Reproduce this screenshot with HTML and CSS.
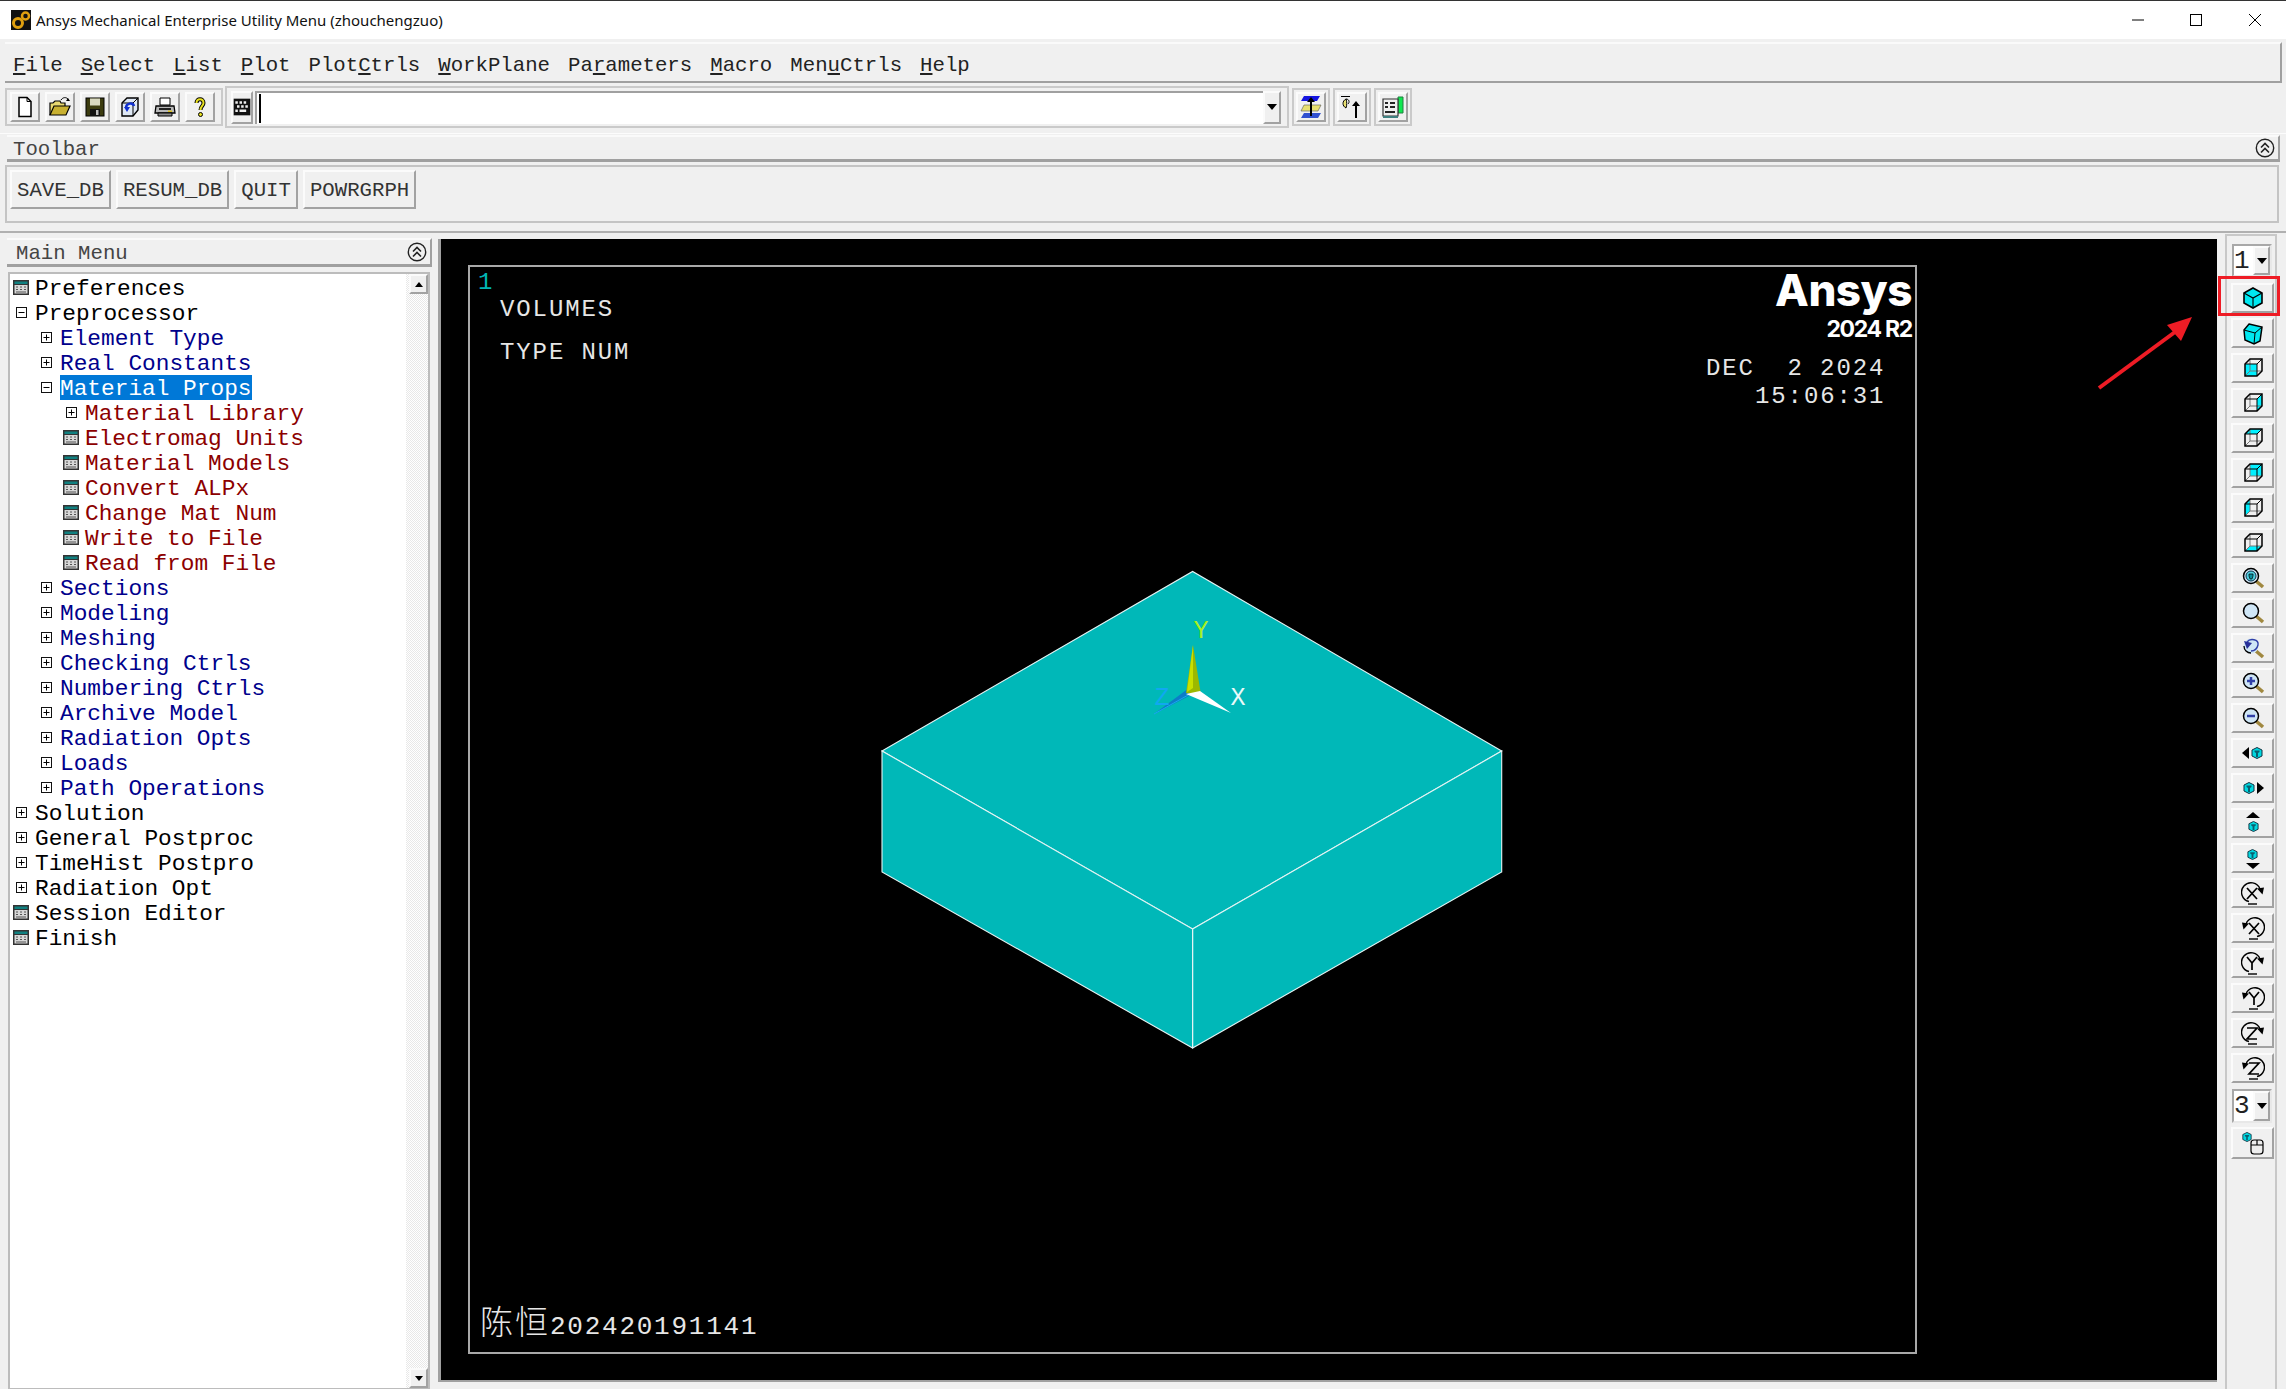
FILE: index.html
```html
<!DOCTYPE html>
<html lang="en">
<head>
<meta charset="utf-8">
<title>Ansys Mechanical Enterprise Utility Menu</title>
<link rel="stylesheet" href="styles.css">
</head>
<body>
<svg class="defs" aria-hidden="true">
  <symbol id="i-app" viewBox="0 0 20 20"><rect width="20" height="20" fill="#111"/><circle cx="7" cy="13" r="4.5" fill="none" stroke="#e0a010" stroke-width="3"/><circle cx="14.500" cy="6" r="3.500" fill="none" stroke="#e0a010" stroke-width="2.500"/></symbol>
  <symbol id="i-new" viewBox="0 0 24 24"><path d="M6 2.500h8l4 4v15H6z" fill="#fff" stroke="#000" stroke-width="1.500"/><path d="M14 2.500v4h4" fill="none" stroke="#000"/></symbol>
  <symbol id="i-open" viewBox="0 0 24 24"><path d="M2 20V8h3l2-2h5l1 2h4v3" fill="#e8d870" stroke="#000" stroke-width="1.200"/><path d="M2 20l4-9h16l-4 9z" fill="#c8b030" stroke="#000" stroke-width="1.200"/><path d="M13 5c2-3 5-3 7-1" fill="none" stroke="#000"/><path d="M22 6l-4 0 2-3z"/></symbol>
  <symbol id="i-save" viewBox="0 0 24 24"><rect x="3" y="3" width="18" height="18" fill="#3c3c10" stroke="#000"/><rect x="7" y="3.500" width="10" height="7" fill="#d8d8c0"/><rect x="7" y="14" width="10" height="7" fill="#111"/><rect x="13" y="15" width="2.500" height="5" fill="#bbb"/></symbol>
  <symbol id="i-db" viewBox="0 0 24 24"><path d="M4 8l5-5h11v12l-5 6H4z" fill="#dfe8f4" stroke="#000" stroke-width="1.400"/><path d="M4 8h11v13M15 8l5-5" fill="none" stroke="#000"/><path d="M8 13c0-5 7-6 8-2" fill="none" stroke="#1030d0" stroke-width="2.500"/><path d="M6 12h6l-3 5z" fill="#1030d0"/></symbol>
  <symbol id="i-print" viewBox="0 0 24 24"><path d="M7 3h10v7H7z" fill="#fff" stroke="#000"/><path d="M3 11h18l1 7H2z" fill="#b8b8b8" stroke="#000" stroke-width="1.300"/><path d="M5 18h14v3H5z" fill="#8a8a8a" stroke="#000"/><path d="M6 14h12" stroke="#222" stroke-width="2"/><rect x="15" y="15.500" width="4" height="1.500" fill="#d8c020"/></symbol>
  <symbol id="i-help" viewBox="0 0 24 24"><path d="M8.500 8c0-5 7-5 7 0 0 3-3 3-3 7" fill="none" stroke="#000" stroke-width="4"/><path d="M8.500 8c0-5 7-5 7 0 0 3-3 3-3 7" fill="none" stroke="#e8e020" stroke-width="2"/><circle cx="12.500" cy="19.500" r="2" fill="#e8e020" stroke="#000"/></symbol>
  <symbol id="i-keys" viewBox="0 0 24 24"><rect x="2" y="2" width="20" height="20" fill="#111"/><path d="M4 5h3v3H4zM9 5h3v3H9zM14 5h3v3h-3zM6 10h3v3H6zM11 10h3v3h-3zM16 10h3v3h-3zM4 15h3v3H4zM9 15h8v3H9z" fill="#eee"/></symbol>
  <symbol id="i-planes" viewBox="0 0 24 24"><path d="M5 1h16l-3 5H2z" fill="#1414e0"/><path d="M5 10h17l-3 6H2z" fill="#e8e070" stroke="#555" stroke-width=".6"/><path d="M5 18h17l-3 5H2z" fill="#3050d0"/><path d="M11 21V7H8l4-5 4 5h-3v14z" fill="#000"/></symbol>
  <symbol id="i-moon" viewBox="0 0 24 24"><path d="M1 1.500h9" stroke="#000"/><path d="M6 4c-4 2-4 7 0 9 1-3 1-6 0-9z" fill="#e8e070" stroke="#000"/><path d="M6 4c3 0 4 3 2 5" fill="none" stroke="#000"/><path d="M15 23V11h-3l4-5 4 5h-3v12z" fill="#000"/></symbol>
  <symbol id="i-book" viewBox="0 0 24 24"><path d="M17 2h5v16h-5z" fill="#10e850" stroke="#208040"/><path d="M2 4h15v17H2z" fill="#eee" stroke="#333" stroke-width="1.200"/><path d="M2 21h15v2H2z" fill="#408080"/><path d="M4 8h3M9 8h5M4 12h3M9 12h5M4 17h10" stroke="#222" stroke-width="1.800"/></symbol>
  <symbol id="i-iso" viewBox="0 0 24 24"><path d="M12 2l9 5v10l-9 5-9-5V7z" fill="#00e8f0" stroke="#000" stroke-width="1.600"/><path d="M3 7l9 5 9-5M12 12v10" fill="none" stroke="#000" stroke-width="1.100"/></symbol>
  <symbol id="i-obl" viewBox="0 0 24 24"><path d="M8 3l13 3-2 14-6 3-9-4-1-10z" fill="#00e8f0" stroke="#000" stroke-width="1.500"/><path d="M3 9l11 3-1 11M14 12l7-6" fill="none" stroke="#000"/></symbol>
  <symbol id="i-wire" viewBox="0 0 24 24"><path d="M9 3v12h12M9 15l-5 5" fill="none" stroke="#777"/><path d="M4 8l5-5h12v12l-5 5H4z" fill="none" stroke="#000" stroke-width="1.500"/><path d="M4 8h12v12M16 8l5-5" fill="none" stroke="#000"/></symbol>
  <symbol id="i-front" viewBox="0 0 24 24"><rect x="4" y="8" width="12" height="12" fill="#00f0ff"/><use href="#i-wire"/></symbol>
  <symbol id="i-right" viewBox="0 0 24 24"><path d="M16 8l5-5v12l-5 5z" fill="#00f0ff"/><use href="#i-wire"/></symbol>
  <symbol id="i-top" viewBox="0 0 24 24"><path d="M4 8l5-5h12l-5 5z" fill="#00f0ff"/><use href="#i-wire"/></symbol>
  <symbol id="i-back" viewBox="0 0 24 24"><rect x="9" y="3" width="12" height="12" fill="#00f0ff"/><use href="#i-wire"/></symbol>
  <symbol id="i-left" viewBox="0 0 24 24"><path d="M4 8l5-5v12l-5 5z" fill="#00f0ff"/><use href="#i-wire"/></symbol>
  <symbol id="i-bottom" viewBox="0 0 24 24"><path d="M4 20l5-5h12l-5 5z" fill="#00f0ff"/><use href="#i-wire"/></symbol>
  <symbol id="i-lens" viewBox="0 0 24 24"><path d="M15 15l7 6" stroke="#a08840" stroke-width="3.500"/><circle cx="10" cy="10" r="7.500" fill="#cfe6f6" stroke="#000" stroke-width="1.500"/></symbol>
  <symbol id="i-zfit" viewBox="0 0 24 24"><use href="#i-lens"/><circle cx="10" cy="10" r="5" fill="#4fd0e0" stroke="#10304a"/><path d="M8 8h4v2l-1 3H9l-1-3z" fill="#0890a0" stroke="#000" stroke-width=".7"/></symbol>
  <symbol id="i-zback" viewBox="0 0 24 24"><path d="M15 15l7 6" stroke="#a08840" stroke-width="3.500"/><circle cx="10" cy="10" r="7.500" fill="#cfe6f6"/><path d="M6 6c3-4 12-3 11 3-1 4-3 6-7 6" fill="none" stroke="#3040a8" stroke-width="1.400"/><path d="M3 5l8 2-5 6z" fill="#28309a"/><path d="M3 10c0 4 3 7 7 7" fill="none" stroke="#000" stroke-width="1.300"/></symbol>
  <symbol id="i-zin" viewBox="0 0 24 24"><use href="#i-lens"/><path d="M6 10h8M10 6v8" stroke="#3040a8" stroke-width="2.500"/></symbol>
  <symbol id="i-zout" viewBox="0 0 24 24"><use href="#i-lens"/><path d="M6 10h8" stroke="#3040a8" stroke-width="2.500"/></symbol>
  <symbol id="i-hex" viewBox="0 0 12 12"><path d="M6 .5l5 2.500v6l-5 2.500-5-2.500V3z" fill="#00d8e0" stroke="#103040"/><path d="M3.500 3.500h5v1.500l-1.500 1v4H5V6L3.500 5z" fill="#086070"/></symbol>
  <symbol id="i-pl" viewBox="0 0 24 24"><path d="M1 12l7-6v12z" fill="#000"/><use href="#i-hex" x="10" y="6" width="12" height="12"/></symbol>
  <symbol id="i-pr" viewBox="0 0 24 24"><path d="M23 12l-7-6v12z" fill="#000"/><use href="#i-hex" x="2" y="6" width="12" height="12"/></symbol>
  <symbol id="i-pu" viewBox="0 0 24 24"><path d="M12 1l-7 6h14z" fill="#000"/><use href="#i-hex" x="7" y="10" width="11" height="11"/></symbol>
  <symbol id="i-pd" viewBox="0 0 24 24"><path d="M12 23l-7-6h14z" fill="#000"/><use href="#i-hex" x="6" y="3" width="11" height="11"/></symbol>
  <symbol id="i-arc" viewBox="0 0 24 24"><path d="M8 20.500A9.500 9.500 0 1 1 19 8" fill="none" stroke="#000" stroke-width="1.400"/><path d="M7 23h9" stroke="#000" stroke-width="1.400"/><path d="M16 7.500l7-1-1.500 7z" fill="#000"/></symbol>
  <symbol id="i-xp" viewBox="0 0 24 24"><use href="#i-arc"/><path d="M6 7l10 11M16 7L6 18" stroke="#000" stroke-width="1.700"/></symbol>
  <symbol id="i-xm" viewBox="0 0 24 24"><g transform="translate(24) scale(-1 1)"><use href="#i-arc"/></g><path d="M8 7l10 11M18 7L8 18" stroke="#000" stroke-width="1.700"/></symbol>
  <symbol id="i-yp" viewBox="0 0 24 24"><use href="#i-arc"/><path d="M6 6l5 6 5-6M11 12v7" fill="none" stroke="#000" stroke-width="1.700"/></symbol>
  <symbol id="i-ym" viewBox="0 0 24 24"><g transform="translate(24) scale(-1 1)"><use href="#i-arc"/></g><path d="M8 6l5 6 5-6M13 12v7" fill="none" stroke="#000" stroke-width="1.700"/></symbol>
  <symbol id="i-zp" viewBox="0 0 24 24"><use href="#i-arc"/><path d="M6 7h10L6 18h10" fill="none" stroke="#000" stroke-width="1.700"/></symbol>
  <symbol id="i-zm" viewBox="0 0 24 24"><g transform="translate(24) scale(-1 1)"><use href="#i-arc"/></g><path d="M8 7h10L8 18h10" fill="none" stroke="#000" stroke-width="1.700"/></symbol>
  <symbol id="i-mouse" viewBox="0 0 24 24"><use href="#i-hex" x="1" y="1" width="10" height="10"/><rect x="10" y="9" width="12" height="14" rx="3" fill="#eee" stroke="#000" stroke-width="1.200"/><path d="M10 14h12M16 9v5" stroke="#000" stroke-width="1.200"/></symbol>
  <symbol id="i-calc" viewBox="0 0 16 15"><rect width="16" height="15" fill="#333"/><rect x="1.500" y="1.500" width="13" height="2.500" fill="#108080"/><rect x="1.500" y="5" width="13" height="8.500" fill="#d8d8d8"/><path d="M3 7h2M7 7h2M11 7h2M3 9.500h2M7 9.500h2M11 9.500h2M3 12h10" stroke="#555"/></symbol>
  <symbol id="i-plus" viewBox="0 0 11 11"><rect x=".5" y=".5" width="10" height="10" fill="#fff" stroke="#111"/><path d="M2.500 5.500h6M5.500 2.500v6" stroke="#000"/></symbol>
  <symbol id="i-minus" viewBox="0 0 11 11"><rect x=".5" y=".5" width="10" height="10" fill="#fff" stroke="#111"/><path d="M2.500 5.500h6" stroke="#000"/></symbol>
  <symbol id="i-collapse" viewBox="0 0 20 20"><circle cx="10" cy="10" r="8.700" fill="none" stroke="#222" stroke-width="1.400"/><path d="M6 9.500l4-4 4 4M6 14.500l4-4 4 4" fill="none" stroke="#222" stroke-width="1.600"/></symbol>
  <symbol id="i-down" viewBox="0 0 10 6"><path d="M0 0h10L5 6z" fill="#000"/></symbol>
  <symbol id="i-up" viewBox="0 0 10 6"><path d="M0 6h10L5 0z" fill="#000"/></symbol>
</svg>

<div class="titlebar">
  <svg class="appicon"><use href="#i-app"/></svg>
  <span class="titletext">Ansys Mechanical Enterprise Utility Menu (zhouchengzuo)</span>
  <span class="winbtns">
    <span class="winbtn"><svg class="winglyph" viewBox="0 0 12 12"><path d="M0 6h12" stroke="#000"/></svg></span>
    <span class="winbtn"><svg class="winglyph" viewBox="0 0 12 12"><rect x=".5" y=".5" width="11" height="11" fill="none" stroke="#000"/></svg></span>
    <span class="winbtn"><svg class="winglyph" viewBox="0 0 12 12"><path d="M0 0l12 12M12 0L0 12" stroke="#000"/></svg></span>
  </span>
</div>

<nav class="menubar">
  <span><u>F</u>ile</span><span><u>S</u>elect</span><span><u>L</u>ist</span><span><u>P</u>lot</span><span>Plot<u>C</u>trls</span><span><u>W</u>orkPlane</span><span>Pa<u>r</u>ameters</span><span><u>M</u>acro</span><span>Men<u>u</u>Ctrls</span><span><u>H</u>elp</span>
</nav>

<div class="toolrow">
  <div class="group filegroup">
    <span class="btn ib"><svg class="ic24"><use href="#i-new"/></svg></span>
    <span class="btn ib"><svg class="ic24"><use href="#i-open"/></svg></span>
    <span class="btn ib"><svg class="ic24"><use href="#i-save"/></svg></span>
    <span class="btn ib"><svg class="ic24"><use href="#i-db"/></svg></span>
    <span class="btn ib"><svg class="ic24"><use href="#i-print"/></svg></span>
    <span class="btn ib"><svg class="ic24"><use href="#i-help"/></svg></span>
  </div>
  <div class="group cmdgroup">
    <span class="btn keysbtn"><svg class="ic20"><use href="#i-keys"/></svg></span>
    <span class="cmdinput"><span class="caret"></span></span>
    <span class="btn dropbtn"><svg class="dropglyph"><use href="#i-down"/></svg></span>
  </div>
  <div class="cell"><span class="btn ib"><svg class="ic24"><use href="#i-planes"/></svg></span></div>
  <div class="cell"><span class="btn ib"><svg class="ic24"><use href="#i-moon"/></svg></span></div>
  <div class="cell"><span class="btn ib"><svg class="ic24"><use href="#i-book"/></svg></span></div>
</div>

<div class="divider"></div>

<div class="labelbar">
  <span class="labeltext">Toolbar</span>
  <svg class="collapse"><use href="#i-collapse"/></svg>
</div>

<div class="abbrpanel">
  <span class="btn abbr">SAVE_DB</span>
  <span class="btn abbr">RESUM_DB</span>
  <span class="btn abbr">QUIT</span>
  <span class="btn abbr">POWRGRPH</span>
</div>

<div class="sep"></div>

<main class="main">
  <aside class="sidebar">
    <div class="labelbar sidehead">
      <span class="labeltext">Main Menu</span>
      <svg class="collapse"><use href="#i-collapse"/></svg>
    </div>
    <div class="treebox">
      <ul class="tree">
        <li class="row l0"><svg class="calc"><use href="#i-calc"/></svg><span>Preferences</span></li>
        <li class="row l0"><svg class="twist"><use href="#i-minus"/></svg><span>Preprocessor</span></li>
        <li class="row l1"><svg class="twist"><use href="#i-plus"/></svg><span>Element Type</span></li>
        <li class="row l1"><svg class="twist"><use href="#i-plus"/></svg><span>Real Constants</span></li>
        <li class="row l1"><svg class="twist"><use href="#i-minus"/></svg><span class="selected">Material Props</span></li>
        <li class="row l2"><svg class="twist"><use href="#i-plus"/></svg><span>Material Library</span></li>
        <li class="row l2"><svg class="calc"><use href="#i-calc"/></svg><span>Electromag Units</span></li>
        <li class="row l2"><svg class="calc"><use href="#i-calc"/></svg><span>Material Models</span></li>
        <li class="row l2"><svg class="calc"><use href="#i-calc"/></svg><span>Convert ALPx</span></li>
        <li class="row l2"><svg class="calc"><use href="#i-calc"/></svg><span>Change Mat Num</span></li>
        <li class="row l2"><svg class="calc"><use href="#i-calc"/></svg><span>Write to File</span></li>
        <li class="row l2"><svg class="calc"><use href="#i-calc"/></svg><span>Read from File</span></li>
        <li class="row l1"><svg class="twist"><use href="#i-plus"/></svg><span>Sections</span></li>
        <li class="row l1"><svg class="twist"><use href="#i-plus"/></svg><span>Modeling</span></li>
        <li class="row l1"><svg class="twist"><use href="#i-plus"/></svg><span>Meshing</span></li>
        <li class="row l1"><svg class="twist"><use href="#i-plus"/></svg><span>Checking Ctrls</span></li>
        <li class="row l1"><svg class="twist"><use href="#i-plus"/></svg><span>Numbering Ctrls</span></li>
        <li class="row l1"><svg class="twist"><use href="#i-plus"/></svg><span>Archive Model</span></li>
        <li class="row l1"><svg class="twist"><use href="#i-plus"/></svg><span>Radiation Opts</span></li>
        <li class="row l1"><svg class="twist"><use href="#i-plus"/></svg><span>Loads</span></li>
        <li class="row l1"><svg class="twist"><use href="#i-plus"/></svg><span>Path Operations</span></li>
        <li class="row l0"><svg class="twist"><use href="#i-plus"/></svg><span>Solution</span></li>
        <li class="row l0"><svg class="twist"><use href="#i-plus"/></svg><span>General Postproc</span></li>
        <li class="row l0"><svg class="twist"><use href="#i-plus"/></svg><span>TimeHist Postpro</span></li>
        <li class="row l0"><svg class="twist"><use href="#i-plus"/></svg><span>Radiation Opt</span></li>
        <li class="row l0"><svg class="calc"><use href="#i-calc"/></svg><span>Session Editor</span></li>
        <li class="row l0"><svg class="calc"><use href="#i-calc"/></svg><span>Finish</span></li>
      </ul>
      <div class="scroll">
        <span class="btn scrollbtn"><svg class="scrollglyph"><use href="#i-up"/></svg></span>
        <span class="scrolltrack"></span>
        <span class="btn scrollbtn"><svg class="scrollglyph"><use href="#i-down"/></svg></span>
      </div>
    </div>
  </aside>

  <section class="gfx">
    <div class="black">
      <div class="frame">
        <svg class="plot" viewBox="468 265 1449 1089">
          <path d="M882 751L1192.600 571.500 1501.700 751 1192.600 929z" class="f"/>
          <path d="M882 751L1192.600 929V1048L882 872zM1192.600 929L1501.700 751V872L1192.600 1048z" class="f"/>
          <path d="M1192.600 929V1048" class="e"/>
          <path d="M1154 714L1189 688 1193 694z" fill="#0c7cc8"/>
          <path d="M1154 714L1190 694" stroke="#18a8f0" stroke-width="1"/>
          <path d="M1193 645L1186 693 1201 695z" fill="#9cb800"/>
          <path d="M1193 645L1187 692 1193 688z" fill="#c8e000"/>
          <path d="M1231 713L1186 694 1200 691z" fill="#fff"/>
          <text x="1201" y="638" class="axis ay">Y</text>
          <text x="1238" y="705" class="axis ax">X</text>
          <text x="1162" y="705" class="axis az">Z</text>
          <text x="478" y="289" class="vt wn">1</text>
          <text x="500" y="316" class="vt">VOLUMES</text>
          <text x="500" y="359" class="vt">TYPE NUM</text>
          <text x="1706" y="375" class="vt">DEC  2 2024</text>
          <text x="1755" y="403" class="vt">15:06:31</text>
          <text x="1912" y="306" class="logo">Ansys</text>
          <text x="1912" y="337" class="rel">2024 R2</text>
          <text x="480" y="1334" class="vt note"><tspan class="cjk">陈恒</tspan>202420191141</text>
        </svg>
      </div>
    </div>
  </section>

  <aside class="viewpanel">
    <div class="combo"><span class="comboval">1</span><span class="btn combobtn"><svg class="dropglyph"><use href="#i-down"/></svg></span></div>
    <span class="btn vb"><svg class="ic24"><use href="#i-iso"/></svg></span>
    <span class="btn vb"><svg class="ic24"><use href="#i-obl"/></svg></span>
    <span class="btn vb"><svg class="ic24"><use href="#i-front"/></svg></span>
    <span class="btn vb"><svg class="ic24"><use href="#i-right"/></svg></span>
    <span class="btn vb"><svg class="ic24"><use href="#i-top"/></svg></span>
    <span class="btn vb"><svg class="ic24"><use href="#i-back"/></svg></span>
    <span class="btn vb"><svg class="ic24"><use href="#i-left"/></svg></span>
    <span class="btn vb"><svg class="ic24"><use href="#i-bottom"/></svg></span>
    <span class="btn vb"><svg class="ic24"><use href="#i-zfit"/></svg></span>
    <span class="btn vb"><svg class="ic24"><use href="#i-lens"/></svg></span>
    <span class="btn vb"><svg class="ic24"><use href="#i-zback"/></svg></span>
    <span class="btn vb"><svg class="ic24"><use href="#i-zin"/></svg></span>
    <span class="btn vb"><svg class="ic24"><use href="#i-zout"/></svg></span>
    <span class="btn vb"><svg class="ic24"><use href="#i-pl"/></svg></span>
    <span class="btn vb"><svg class="ic24"><use href="#i-pr"/></svg></span>
    <span class="btn vb"><svg class="ic24"><use href="#i-pu"/></svg></span>
    <span class="btn vb"><svg class="ic24"><use href="#i-pd"/></svg></span>
    <span class="btn vb"><svg class="ic24"><use href="#i-xp"/></svg></span>
    <span class="btn vb"><svg class="ic24"><use href="#i-xm"/></svg></span>
    <span class="btn vb"><svg class="ic24"><use href="#i-yp"/></svg></span>
    <span class="btn vb"><svg class="ic24"><use href="#i-ym"/></svg></span>
    <span class="btn vb"><svg class="ic24"><use href="#i-zp"/></svg></span>
    <span class="btn vb"><svg class="ic24"><use href="#i-zm"/></svg></span>
    <div class="combo combo3"><span class="comboval">3</span><span class="btn combobtn"><svg class="dropglyph"><use href="#i-down"/></svg></span></div>
    <span class="btn vb vblast"><svg class="ic24"><use href="#i-mouse"/></svg></span>
  </aside>
</main>

<div class="redbox"></div>
<svg class="redarrow" viewBox="0 0 100 75"><path d="M4 73L80 17" stroke="#ee1c25" stroke-width="4"/><path d="M97 2L72 10 86 26z" fill="#ee1c25"/></svg>
</body>
</html>
```
FILE: styles.css
```css
* { box-sizing: border-box; }
html, body { margin: 0; padding: 0; }
body {
  position: relative;
  width: 2286px;
  height: 1389px;
  overflow: hidden;
  background: #f0f0f0;
  font-family: "Liberation Mono", "Noto Sans CJK SC", monospace;
  font-size: 20.7px;
  color: #333;
  display: flex;
  flex-direction: column;
}
.defs { position: absolute; width: 0; height: 0; }

.titlebar {
  height: 39px;
  flex: none;
  display: flex;
  align-items: center;
  background: #fff;
  border-top: 1px solid #333;
  padding: 0 2px 0 11px;
}
.appicon { width: 20px; height: 20px; flex: none; }
.titletext {
  margin-left: 5px;
  font-family: "Noto Sans", sans-serif;
  font-size: 15px;
  color: #111;
}
.winbtns { margin-left: auto; display: flex; }
.winbtn { width: 58.5px; display: flex; justify-content: center; }
.winglyph { width: 12px; height: 12px; }

.menubar {
  flex: none;
  margin: 3px 4px 0 5px;
  height: 41px;
  display: flex;
  align-items: center;
  gap: 18px;
  padding: 5px 0 0 8px;
  border-bottom: 2px solid #a0a0a0;
  border-right: 2px solid #a0a0a0;
  border-top: 2px solid #fafafa;
  color: #222;
}

.btn {
  display: inline-flex;
  align-items: center;
  justify-content: center;
  background: #f0f0f0;
  border: 2px solid;
  border-color: #fbfbfb #a2a2a2 #a2a2a2 #fbfbfb;
}
.toolrow {
  flex: none;
  margin-top: 3px;
  height: 42px;
  padding-left: 5px;
  display: flex;
  align-items: center;
}
.group, .cell { border: 2px solid #cacaca; display: flex; align-items: center; }
.filegroup { width: 218px; height: 38px; padding-left: 3px; gap: 5px; }
.ib { width: 30px; height: 30px; flex: none; }
.ic24 { width: 24px; height: 24px; flex: none; }
.ic20 { width: 20px; height: 20px; flex: none; }
.cmdgroup { width: 1064px; height: 42px; margin-left: 2px; padding-left: 4px; }
.keysbtn { width: 22px; height: 33px; flex: none; }
.cmdinput {
  width: 1008px;
  height: 33px;
  margin-left: 2px;
  background: #fff;
  border-top: 2px solid #a0a0a0;
  border-left: 2px solid #a0a0a0;
  padding: 1px 0 1px 2px;
  display: flex;
  flex: none;
}
.caret { width: 2px; background: #000; }
.dropbtn { width: 18px; height: 33px; flex: none; }
.dropglyph { width: 10px; height: 6px; }
.cell { width: 38px; height: 38px; padding: 2px; margin-left: 3px; flex: none; }

.divider { flex: none; height: 1px; margin-top: 5px; background: #fcfcfc; }

.labelbar {
  flex: none;
  height: 27px;
  margin: 1px 6px 0 7px;
  padding: 0 3px 0 6px;
  display: flex;
  align-items: center;
  justify-content: space-between;
  border-top: 2px solid #fafafa;
  border-right: 2px solid #a0a0a0;
  border-bottom: 3px solid #a0a0a0;
  color: #444;
}
.labeltext { padding-top: 3px; }
.collapse { width: 20px; height: 20px; flex: none; }

.abbrpanel {
  flex: none;
  height: 58px;
  margin: 3px 7px 0 5px;
  padding: 3px 0 0 3px;
  border: 2px solid #c4c4c4;
  display: flex;
  align-items: flex-start;
  gap: 5px;
}
.abbr { height: 39px; padding: 2px 5px 0; color: #333; }

.sep { flex: none; height: 2px; margin-top: 8px; background: #b0b0b0; }

.main { flex: 1; min-height: 0; margin-top: 1px; display: flex; }

.sidebar {
  width: 425px;
  margin-left: 7px;
  padding-top: 4px;
  flex: none;
  display: flex;
  flex-direction: column;
}
.sidehead { margin: 0; height: 29px; padding: 0 3px 0 9px; }
.treebox {
  flex: 1;
  min-height: 0;
  margin: 5px 2px 0 1px;
  background: #fff;
  border: 2px solid #bcbcbc;
  border-bottom-width: 1px;
  display: flex;
}
.tree { flex: 1; list-style: none; margin: 0; padding: 1px 0 0; overflow: hidden; }
.row {
  height: 25px;
  display: flex;
  align-items: center;
  font-size: 22.8px;
  white-space: pre;
}
.row span { line-height: 22px; padding-top: 3px; }
.l0 { padding-left: 3px; color: #000; }
.l1 { padding-left: 28px; color: #00008c; }
.l2 { padding-left: 53px; color: #8c0000; }
.twist { width: 11px; height: 11px; margin: 0 8px 0 3px; flex: none; }
.calc { width: 16px; height: 15px; margin-right: 6px; flex: none; }
.row .selected { background: #0078d7; color: #fff; }

.scroll {
  width: 22px;
  flex: none;
  display: flex;
  flex-direction: column;
  align-items: flex-end;
  background: repeating-conic-gradient(#fff 0 25%, #e8e8e8 0 50%) 0 0 / 2px 2px;
}
.scrollbtn { width: 19px; height: 20px; flex: none; }
.scrollglyph { width: 8px; height: 5px; }
.scrolltrack { flex: 1; }

.gfx { width: 1779px; margin-left: 6px; padding-top: 5px; flex: none; }
.black {
  width: 1779px;
  height: 1143px;
  background: #000;
  border-left: 3px solid #a0a0a0;
  border-bottom: 2px solid #a0a0a0;
  padding: 26px 0 0 27px;
}
.frame {
  position: relative;
  width: 1449px;
  height: 1089px;
  box-shadow: inset 0 0 0 2px #a8a8a8;
}
.plot { position: absolute; left: 0; top: 0; width: 1449px; height: 1089px; overflow: visible; }
.f { fill: #00b8b8; stroke: #e4f4f4; stroke-width: 1.100; }
.e { stroke: #e4f4f4; stroke-width: 1.100; fill: none; }
.axis { font-family: "Liberation Mono", monospace; font-size: 25px; text-anchor: middle; }
.ay { fill: #a8f020; }
.ax { fill: #e8fafa; }
.az { fill: #10a8f0; }
.vt {
  font-family: "Liberation Mono", monospace;
  font-size: 24px;
  letter-spacing: 1.900px;
  fill: #e6e6e6;
  white-space: pre;
}
.wn { fill: #00b4b4; }
.note { font-size: 26px; letter-spacing: 1.750px; }
.cjk {
  font-family: "Noto Sans CJK SC", sans-serif;
  font-size: 33px;
  font-weight: 300;
  letter-spacing: 2px;
}
.logo {
  font-family: Inter, sans-serif;
  font-weight: 800;
  font-size: 44px;
  letter-spacing: -.5px;
  text-anchor: end;
  fill: #fff;
}
.rel {
  font-family: Inter, sans-serif;
  font-weight: 700;
  font-size: 23px;
  letter-spacing: -1.300px;
  text-anchor: end;
  fill: #fff;
}

.viewpanel {
  width: 52px;
  margin-left: 8px;
  padding: 8px 0 0 5px;
  border: 2px solid #c8c8c8;
  border-bottom: 0;
  flex: none;
  display: flex;
  flex-direction: column;
  align-items: flex-start;
}
.combo {
  width: 40px;
  height: 33px;
  margin: 0 0 6px 0;
  border: 2px solid #a8a8a8;
  border-right-color: #e8e8e8;
  border-bottom-color: #e8e8e8;
  background: #fff;
  display: flex;
  flex: none;
  font-size: 26px;
  line-height: 31px;
}
.combo3 { height: 34px; margin: 1px 0 4px; }
.comboval { flex: 1; color: #222; }
.combobtn { width: 17px; flex: none; }
.vb { width: 43px; height: 30px; margin: 0 0 5px -1px; flex: none; }
.vblast { height: 32px; }

.redbox {
  position: absolute;
  left: 2218px;
  top: 276px;
  width: 62px;
  height: 40px;
  border: 3px solid #ee1c25;
}
.redarrow { position: absolute; left: 2095px; top: 315px; width: 100px; height: 75px; }
```
